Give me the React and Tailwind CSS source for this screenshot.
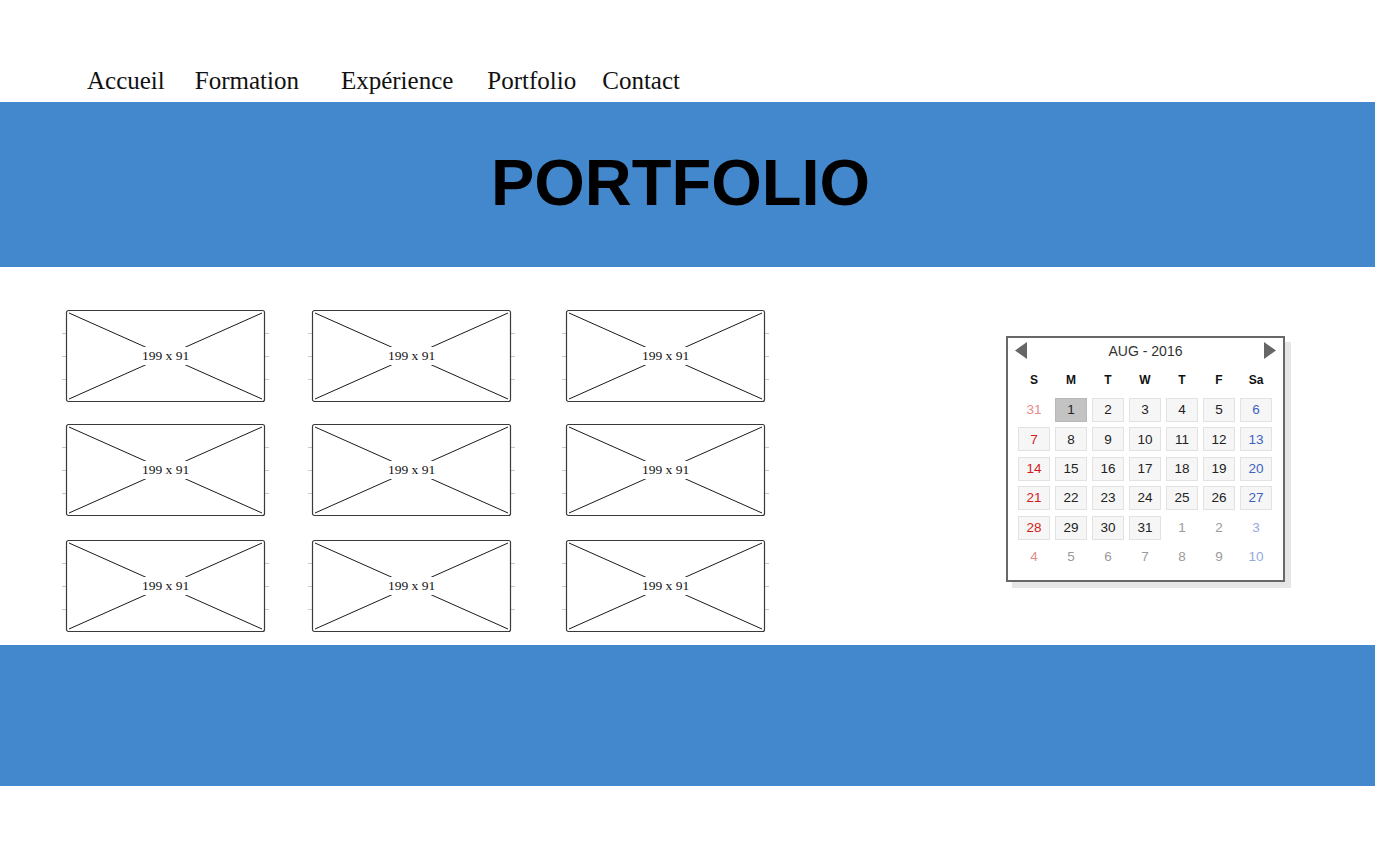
import React from "react";

const navItems = [
  { label: "Accueil", cls: "ml-[87px]" },
  { label: "Formation", cls: "ml-[30px]" },
  { label: "Expérience", cls: "ml-[42px]" },
  { label: "Portfolio", cls: "ml-[34px]" },
  { label: "Contact", cls: "ml-[26px]" },
];

function Placeholder() {
  return (
    <div className="relative w-[199px] h-[92px] flex items-center justify-center">
      <svg
        className="absolute inset-0 overflow-visible"
        width="199"
        height="92"
        viewBox="0 0 199 92"
      >
        <g stroke="#c8c8c8" strokeWidth="1">
          <line x1="-4" y1="23.5" x2="1" y2="23.5" />
          <line x1="-4" y1="46.5" x2="1" y2="46.5" />
          <line x1="-4" y1="69.5" x2="1" y2="69.5" />
          <line x1="198" y1="23.5" x2="203" y2="23.5" />
          <line x1="198" y1="46.5" x2="203" y2="46.5" />
          <line x1="198" y1="69.5" x2="203" y2="69.5" />
        </g>
        <rect
          x="0.5"
          y="0.5"
          width="198"
          height="91"
          rx="2"
          fill="white"
          stroke="#3a3a3a"
          strokeWidth="1.2"
        />
        <g stroke="#1a1a1a" strokeWidth="1">
          <line x1="3" y1="3" x2="196" y2="89" />
          <line x1="3" y1="89" x2="196" y2="3" />
        </g>
      </svg>
      <span className="relative bg-white px-[3px] py-[2px] leading-none text-[13.5px] text-[#111] font-['Liberation_Serif',serif]">
        199 x 91
      </span>
    </div>
  );
}

const calRows = [
  [[31, "o"], [1, "s"], [2, "c"], [3, "c"], [4, "c"], [5, "c"], [6, "c"]],
  [[7, "c"], [8, "c"], [9, "c"], [10, "c"], [11, "c"], [12, "c"], [13, "c"]],
  [[14, "c"], [15, "c"], [16, "c"], [17, "c"], [18, "c"], [19, "c"], [20, "c"]],
  [[21, "c"], [22, "c"], [23, "c"], [24, "c"], [25, "c"], [26, "c"], [27, "c"]],
  [[28, "c"], [29, "c"], [30, "c"], [31, "c"], [1, "o"], [2, "o"], [3, "o"]],
  [[4, "o"], [5, "o"], [6, "o"], [7, "o"], [8, "o"], [9, "o"], [10, "o"]],
];

function cellClass(type, col) {
  const base = "h-[24px] flex items-center justify-center text-[13.5px] leading-none";
  if (type === "o") {
    const color =
      col === 0 ? "text-[#e88a8a]" : col === 6 ? "text-[#93aadf]" : "text-[#9a9a9a]";
    return `${base} ${color}`;
  }
  const color =
    col === 0 ? "text-[#d41a1a]" : col === 6 ? "text-[#3c63c2]" : "text-[#222]";
  if (type === "s") {
    return `${base} ${color} bg-[#c3c3c3] border border-[#b8b8b8]`;
  }
  return `${base} ${color} bg-[#f6f6f6] border border-[#e2e2e2]`;
}

function Calendar() {
  const days = ["S", "M", "T", "W", "T", "F", "Sa"];
  return (
    <div className="w-[279px] h-[246px] bg-white border-2 border-[#686868] shadow-[6px_6px_0_#e6e6e6] font-['Liberation_Sans',Arial,sans-serif]">
      <div className="mt-[4px] h-[17px] px-[7px] flex items-center justify-between">
        <svg width="12" height="17" viewBox="0 0 12 17">
          <polygon points="12,0 12,17 0,8.5" fill="#666" />
        </svg>
        <span className="text-[14px] text-[#333] leading-none">AUG - 2016</span>
        <svg width="12" height="17" viewBox="0 0 12 17">
          <polygon points="0,0 0,17 12,8.5" fill="#666" />
        </svg>
      </div>
      <div className="pl-[10px] pr-[11px]">
        <div className="mt-[13px] grid grid-cols-7 gap-x-[5px]">
          {days.map((d, i) => (
            <div
              key={i}
              className="h-[16px] flex items-center justify-center text-[12px] font-bold text-[#111] leading-none"
            >
              {d}
            </div>
          ))}
        </div>
        <div className="mt-[10px] grid grid-cols-7 gap-x-[5px] gap-y-[5.4px]">
          {calRows.map((row, r) =>
            row.map(([d, t], c) => (
              <div key={`${r}-${c}`} className={cellClass(t, c)}>
                {d}
              </div>
            ))
          )}
        </div>
      </div>
    </div>
  );
}

export default function App() {
  const colMargins = ["", "ml-[47px]", "ml-[55px]"];
  return (
    <div className="w-[1375px] min-h-[858px] bg-white">
      <nav className="h-[102px] pt-[67px] flex items-start font-['Liberation_Serif','Times_New_Roman',serif] text-[25px] leading-[28px] text-[#111]">
        {navItems.map((n) => (
          <a key={n.label} className={n.cls}>
            {n.label}
          </a>
        ))}
      </nav>
      <header className="h-[165px] bg-[#4388cc] pt-[48px] pr-[14px] text-center">
        <h1 className="text-[65px] leading-none font-bold text-black font-['Liberation_Sans',Arial,sans-serif]">
          PORTFOLIO
        </h1>
      </header>
      <main className="h-[378px] flex items-start pl-[66px]">
        <div className="pt-[43px] flex flex-col gap-y-[22px]">
          {[0, 1, 2].map((r) => (
            <div key={r} className={`flex ${r === 2 ? "mt-[2px]" : ""}`}>
              {[0, 1, 2].map((c) => (
                <div key={c} className={colMargins[c]}>
                  <Placeholder />
                </div>
              ))}
            </div>
          ))}
        </div>
        <div className="ml-[241px] mt-[69px]">
          <Calendar />
        </div>
      </main>
      <footer className="h-[141px] bg-[#4388cc]" />
    </div>
  );
}
